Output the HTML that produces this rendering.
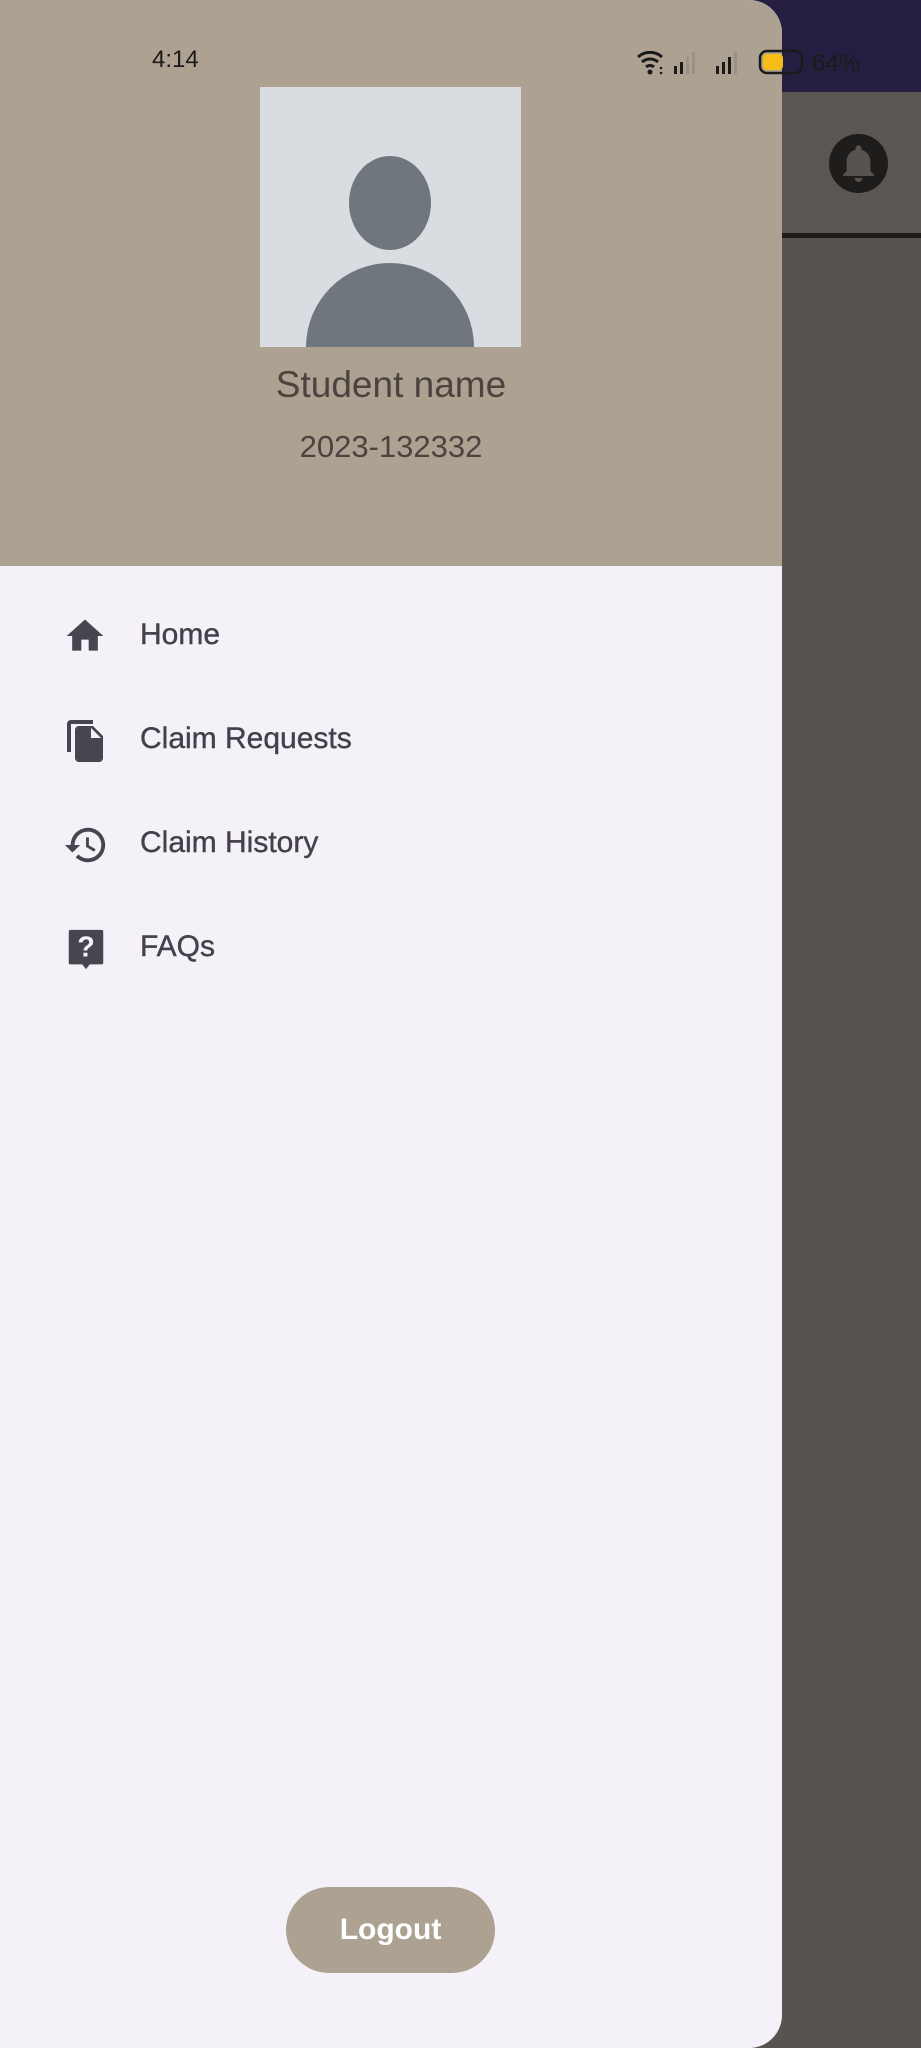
<!DOCTYPE html>
<html><head><meta charset="utf-8"><style>
*{margin:0;padding:0;box-sizing:border-box}
body{width:921px;height:2048px;position:relative;overflow:hidden;background:#57534f;font-family:"Liberation Sans",Roboto,sans-serif}
.top{position:absolute;left:0;top:0;width:921px;height:92px;background:#261e40}
.bar{position:absolute;left:0;top:92px;width:921px;height:141px;background:#5a5652}
.line{position:absolute;left:0;top:233px;width:921px;height:5px;background:#1e1c1b}
.bell{position:absolute;left:829px;top:134px;width:59px;height:59px;border-radius:50%;background:#1f1d1c}
.drawer{position:absolute;left:0;top:0;width:782px;height:2048px;background:#f5f1f8;border-radius:0 33px 33px 0;overflow:hidden}
.head{position:absolute;left:0;top:0;width:782px;height:566px;background:#ada292}
.avatar{position:absolute;left:260px;top:87px;width:261px;height:260px;background:#d9dce0;overflow:hidden}
.name{position:absolute;left:0;width:782px;text-align:center;color:#4b4340}
.item{position:absolute;left:0;height:60px;width:782px}
.item svg{position:absolute;left:63px;top:8px}
.item span{position:absolute;left:140px;top:12px;font-size:30px;color:#45414b;-webkit-text-stroke:0.4px #45414b}
.logout{position:absolute;left:286px;top:1887px;width:209px;height:86px;border-radius:43px;background:#ada292;color:#fff;font-size:30px;font-weight:bold;text-align:center;line-height:86px}
.st{position:absolute;top:46px;font-size:24px;color:#1a1a1a}
</style></head><body>
<div class="top"></div><div class="bar"></div><div class="line"></div>
<div class="bell"><svg width="59" height="59" viewBox="0 0 24 24"><path d="M12 19.5a1.6 1.6 0 0 0 1.6-1.6h-3.2A1.6 1.6 0 0 0 12 19.5zM16.8 15v-4a4.8 4.8 0 0 0-3.6-4.6V5.8a1.2 1.2 0 0 0-2.4 0v.6A4.8 4.8 0 0 0 7.2 11v4l-1.4 1.4v.7h12.4v-.7z" fill="#57534f"/></svg></div>
<div class="drawer">
<div class="head">
<div class="avatar"><svg width="261" height="260" viewBox="0 0 261 260"><ellipse cx="130" cy="116" rx="41" ry="47" fill="#6f767d"/><path d="M46 260a84 84 0 0 1 168 0z" fill="#6f767d"/></svg></div>
<div class="name" style="top:364px;font-size:37px">Student name</div>
<div class="name" style="top:429px;font-size:31px">2023-132332</div>
</div>
<div class="item" style="top:606px"><svg width="44" height="44" viewBox="0 0 24 24"><path d="M10 20v-6h4v6h5v-8h3L12 3 2 12h3v8z" fill="#49454f"/></svg><span>Home</span></div>
<div class="item" style="top:710px"><svg width="48" height="48" viewBox="0 0 24 24"><path d="M15 1H4a2 2 0 0 0-2 2v14h2V3h11zM20 9l-5-5H8a2 2 0 0 0-2 2v14a2 2 0 0 0 2 2h10a2 2 0 0 0 2-2z" fill="#49454f"/><path d="M14 5v5h5z" fill="#f5f1f8"/></svg><span>Claim Requests</span></div>
<div class="item" style="top:814px"><svg width="46" height="46" viewBox="0 0 24 24"><path d="M13 3a9 9 0 0 0-9 9H1l3.9 3.9L9 12H6a7 7 0 1 1 2.05 4.95l-1.42 1.42A9 9 0 1 0 13 3zm-1 5v5l4.25 2.52.77-1.28-3.52-2.09V8z" fill="#49454f"/></svg><span>Claim History</span></div>
<div class="item" style="top:918px"><svg width="46" height="48" viewBox="0 0 24 25"><path d="M4 2h16a1 1 0 0 1 1 1v16a1 1 0 0 1-1 1h-6l-2 2.5L10 20H4a1 1 0 0 1-1-1V3a1 1 0 0 1 1-1z" fill="#49454f"/><text x="12" y="16" text-anchor="middle" font-size="15" font-weight="bold" font-family="Liberation Sans" fill="#f5f1f8">?</text></svg><span>FAQs</span></div>
<div class="logout">Logout</div>
</div>
<div class="st" style="left:152px">4:14</div>
<svg style="position:absolute;left:636px;top:48px" width="230" height="28" viewBox="0 0 230 28">
<path d="M2 9a18 18 0 0 1 24 0M6 14a12 12 0 0 1 16 0M10 19a6 6 0 0 1 8 0" stroke="#1a1a1a" stroke-width="3" fill="none"/><circle cx="14" cy="24" r="2.5" fill="#1a1a1a"/><circle cx="25" cy="20" r="1.3" fill="#1a1a1a"/><circle cx="25" cy="25" r="1.3" fill="#1a1a1a"/>
<rect x="38" y="18" width="3" height="8" fill="#1a1a1a"/><rect x="44" y="14" width="3" height="12" fill="#1a1a1a"/><rect x="50" y="9" width="3" height="17" fill="#9a9088"/><rect x="56" y="4" width="3" height="22" fill="#9a9088"/>
<rect x="80" y="18" width="3" height="8" fill="#1a1a1a"/><rect x="86" y="14" width="3" height="12" fill="#1a1a1a"/><rect x="92" y="9" width="3" height="17" fill="#1a1a1a"/><rect x="98" y="4" width="3" height="22" fill="#9a9088"/>
<rect x="124" y="3" width="42" height="22" rx="7" fill="none" stroke="#1a1a1a" stroke-width="2.5"/><rect x="127" y="6" width="20" height="16" rx="4" fill="#f5bd15"/>
<text x="176" y="23" font-size="24" font-family="Liberation Sans" fill="#1a1a1a">64%</text></svg>
</body></html>
